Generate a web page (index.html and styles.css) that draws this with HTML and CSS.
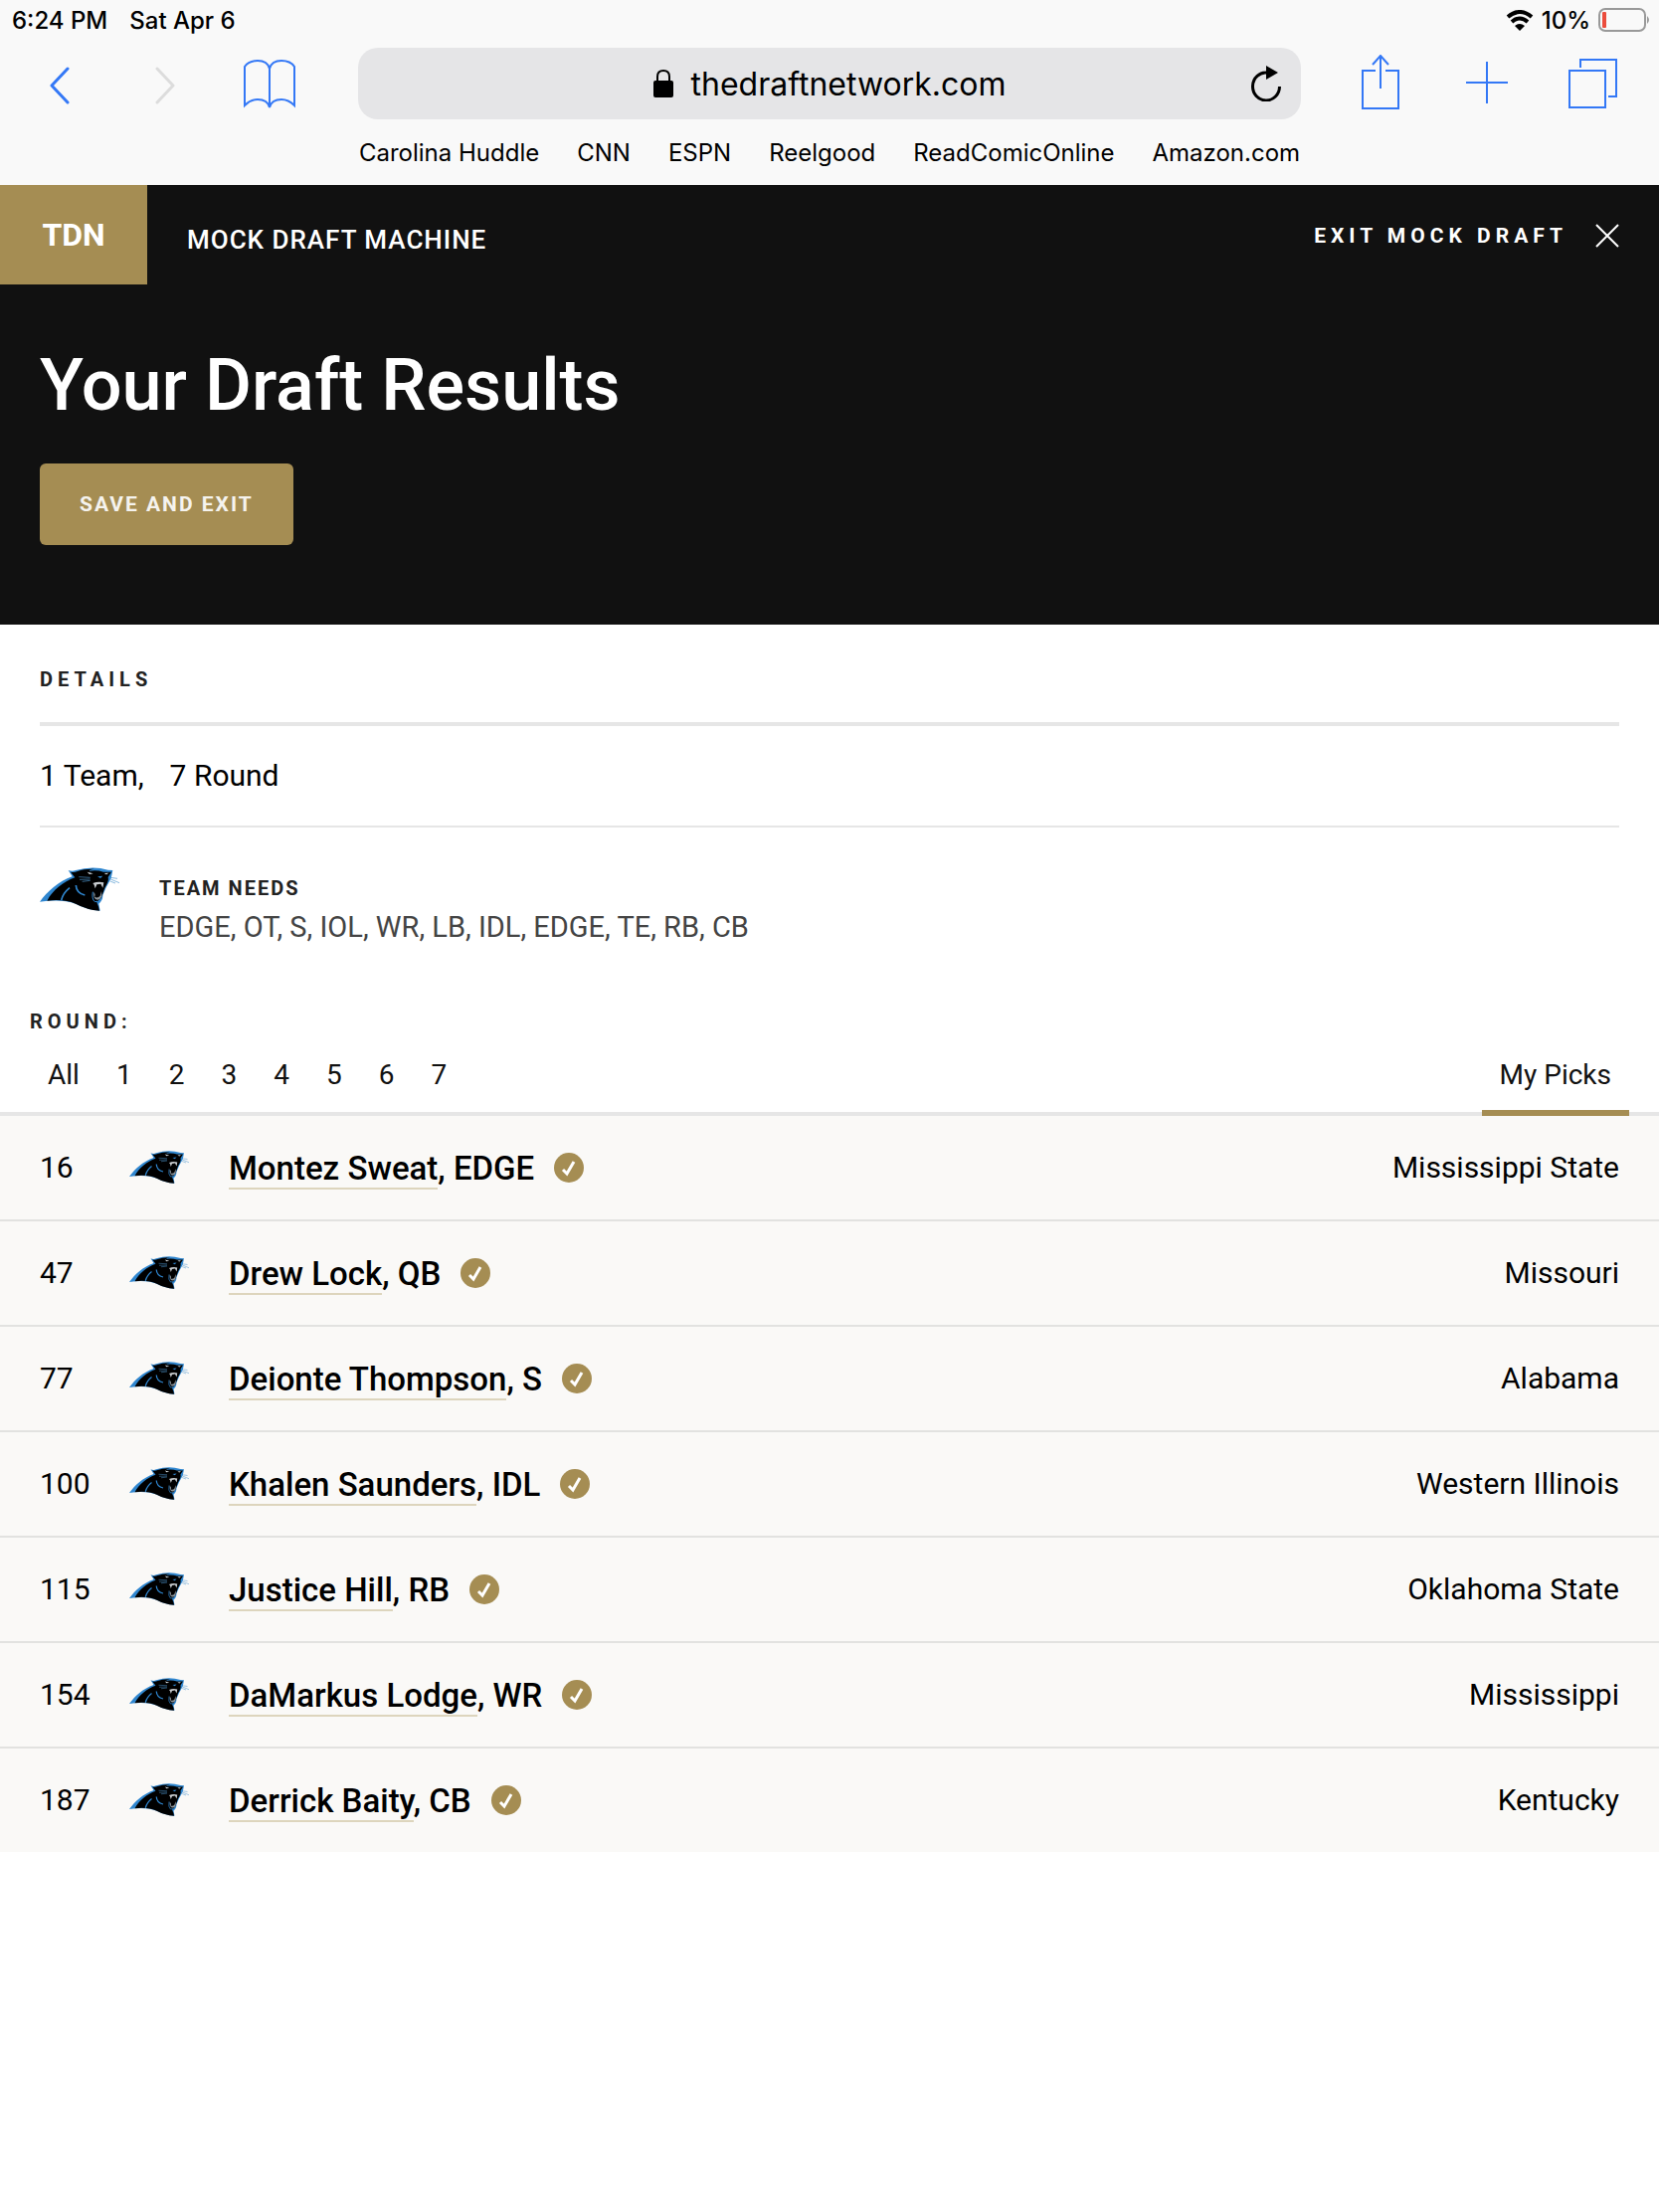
FILE: index.html
```html
<!DOCTYPE html>
<html lang="en">

<head>
    <meta charset="UTF-8">
    <meta name="viewport" content="width=device-width, initial-scale=1.0">
    <title>Mock Draft Machine</title>
    <link rel="stylesheet" href="styles.css">
</head>

<body>
    <svg class="sprite" aria-hidden="true">
        <symbol id="panther" viewBox="0 0 240 132">
            <path fill="#2f86cf" d="M0 104 C22 74 56 42 98 28 L86 9 Q98 14 108 9 Q160-6 206 8 L220 9 L215 34 Q199 60 190 84 Q190 100 178 110 L182 131 Q142 128 108 110 Q64 94 0 104 Z" />
            <path fill="#000" d="M22 101 C40 68 70 44 106 31 L93 14 Q104 17 114 12 Q134 4 164 5 Q146 8 150 11 Q174 8 192 14 L216 14 L206 30 Q210 40 196 62 L186 90 Q182 102 172 106 Q178 118 180 131 Q142 128 108 110 Q74 95 22 101 Z" />
            <path fill="none" stroke="#2f86cf" stroke-width="5" d="M109 54 Q110 78 136 84 M90 62 Q70 78 65 99" />
            <path fill="none" stroke="#2f86cf" stroke-width="3" d="M160 74 Q156 96 166 104 Q178 106 185 94" />
            <path fill="#c9cdd0" d="M160 48 Q176 42 193 46 L190 62 L184 50 L172 52 L167 64 L164 53 Z" />
            <path fill="#8f979d" d="M163 74 Q170 82 166 90 Q176 94 182 86 L186 72 Q190 96 176 98 Q160 98 163 74 Z" />
            <path fill="#dfe6ea" d="M143 14 L161 19 L150 21 Z M194 18 L208 17 L201 22 Z" />
            <path fill="none" stroke="#4f97cf" stroke-width="2" d="M118 29 L152 31 M120 37 L152 36 M128 43 L152 40 M214 31 L234 34 M214 36 L240 47 M212 42 L228 48" />
            <path fill="#2f86cf" d="M174 28 L190 26 L183 33 Z" />
        </symbol>
        <symbol id="check" viewBox="0 0 30 30">
            <circle cx="15" cy="15" r="15" fill="#a58d53" />
            <path fill="none" stroke="#fff" stroke-width="3" d="M9 17 L13 21 L20 9" />
        </symbol>
    </svg>

    <header class="browser">
        <div class="status">
            <span>6:24 PM</span>
            <span>Sat Apr 6</span>
            <span class="status-right">
                <svg width="28" height="21" viewBox="0 0 28 21">
                    <path fill="none" stroke="#000" stroke-width="4" d="M2 7 Q14-3 26 7 M6 12 Q14 5 22 12" />
                    <path d="M14 21 L9 16 Q14 12 19 16 Z" />
                </svg>
                <span>10%</span>
                <svg width="51" height="24" viewBox="0 0 51 24">
                    <rect x="1" y="1" width="46" height="22" rx="6" fill="none" stroke="#999" stroke-width="2" />
                    <rect x="4" y="4" width="4" height="16" rx="1" fill="#eb4d3d" />
                    <path fill="#999" d="M49 8 Q53 12 49 16 Z" />
                </svg>
            </span>
        </div>
        <div class="toolbar">
            <div class="tools">
                <button class="tool" aria-label="Back"><svg width="20" height="42" viewBox="0 -4 20 42"><path class="line back" d="M18 2 L2 19 L18 36" /></svg></button>
                <button class="tool" aria-label="Forward" disabled><svg width="20" height="42" viewBox="0 -4 20 42"><path class="line forward" d="M2 2 L18 19 L2 36" /></svg></button>
                <button class="tool" aria-label="Bookmarks"><svg width="52" height="50" viewBox="0 0 52 50"><path class="line" d="M26 49 V10 Q24 2 14 2 Q5 2 1 8 V47 Q7 41 14 41 Q24 41 26 49 Q28 41 38 41 Q45 41 51 47 V8 Q47 2 38 2 Q28 2 26 10" /></svg></button>
            </div>
            <div class="address">
                <button class="url">
                    <svg width="20" height="28" viewBox="0 0 20 28">
                        <rect y="11" width="20" height="17" rx="2" />
                        <path fill="none" stroke="#000" stroke-width="2" d="M4 12 V7 Q4 1 10 1 Q16 1 16 7 V12" />
                    </svg>
                    thedraftnetwork.com
                </button>
                <button class="reload" aria-label="Reload">
                    <svg width="30" height="36" viewBox="0 0 30 36"><path fill="none" stroke="#000" stroke-width="3" d="M16 7 A13.5 14 0 1 0 28.5 21" /><path d="M15 0 L27 7 L15 14 Z" /></svg>
                </button>
            </div>
            <div class="tools">
                <button class="tool" aria-label="Share"><svg width="38" height="58" viewBox="0 0 38 58"><path class="line" d="M14 16 H1 V54 H37 V16 H24 M19 34 V2 M11 10 L19 1 L27 10" /></svg></button>
                <button class="tool" aria-label="New tab"><svg width="42" height="44" viewBox="0 0 42 44"><path class="line" d="M21 0 V42 M0 21 H42" /></svg></button>
                <button class="tool" aria-label="Tabs"><svg width="50" height="50" viewBox="0 0 50 50"><path class="line" d="M1 12 H37 V49 H1 Z M12 9 V1 H48 V38 H40" /></svg></button>
            </div>
        </div>
        <nav class="favorites">
            <a href="#">Carolina Huddle</a>
            <a href="#">CNN</a>
            <a href="#">ESPN</a>
            <a href="#">Reelgood</a>
            <a href="#">ReadComicOnline</a>
            <a href="#">Amazon.com</a>
        </nav>
    </header>

    <section class="hero">
        <div class="topbar">
            <a class="logo" href="#">TDN</a>
            <span class="machine">MOCK DRAFT MACHINE</span>
            <a class="exit" href="#">EXIT MOCK DRAFT
                <svg width="24" height="24" viewBox="0 0 24 24"><path fill="none" stroke="#fff" stroke-width="2" d="M1 1 L23 23 M23 1 L1 23" /></svg>
            </a>
        </div>
        <div class="hero-content">
            <h1>Your Draft Results</h1>
            <button class="save">SAVE AND EXIT</button>
        </div>
    </section>

    <main>
        <section class="details">
            <h2 class="label">DETAILS</h2>
            <p class="summary"><span>1 Team,</span><span>7 Round</span></p>
            <div class="team">
                <svg class="team-logo" role="img" aria-label="Carolina Panthers"><use href="#panther" /></svg>
                <div>
                    <h3>TEAM NEEDS</h3>
                    <p class="needs">EDGE, OT, S, IOL, WR, LB, IDL, EDGE, TE, RB, CB</p>
                </div>
            </div>
        </section>

        <section class="rounds">
            <h2 class="label">ROUND:</h2>
            <nav class="tabs">
                <button>All</button>
                <button>1</button>
                <button>2</button>
                <button>3</button>
                <button>4</button>
                <button>5</button>
                <button>6</button>
                <button>7</button>
                <button class="active">My Picks</button>
            </nav>
        </section>

        <table class="picks">
            <tbody>
                <tr>
                    <td class="number">16</td>
                    <td class="pick-team"><svg><use href="#panther" /></svg></td>
                    <td class="player"><div><span><a href="#">Montez Sweat</a>, EDGE</span><svg><use href="#check" /></svg></div></td>
                    <td class="college">Mississippi State</td>
                </tr>
                <tr>
                    <td class="number">47</td>
                    <td class="pick-team"><svg><use href="#panther" /></svg></td>
                    <td class="player"><div><span><a href="#">Drew Lock</a>, QB</span><svg><use href="#check" /></svg></div></td>
                    <td class="college">Missouri</td>
                </tr>
                <tr>
                    <td class="number">77</td>
                    <td class="pick-team"><svg><use href="#panther" /></svg></td>
                    <td class="player"><div><span><a href="#">Deionte Thompson</a>, S</span><svg><use href="#check" /></svg></div></td>
                    <td class="college">Alabama</td>
                </tr>
                <tr>
                    <td class="number">100</td>
                    <td class="pick-team"><svg><use href="#panther" /></svg></td>
                    <td class="player"><div><span><a href="#">Khalen Saunders</a>, IDL</span><svg><use href="#check" /></svg></div></td>
                    <td class="college">Western Illinois</td>
                </tr>
                <tr>
                    <td class="number">115</td>
                    <td class="pick-team"><svg><use href="#panther" /></svg></td>
                    <td class="player"><div><span><a href="#">Justice Hill</a>, RB</span><svg><use href="#check" /></svg></div></td>
                    <td class="college">Oklahoma State</td>
                </tr>
                <tr>
                    <td class="number">154</td>
                    <td class="pick-team"><svg><use href="#panther" /></svg></td>
                    <td class="player"><div><span><a href="#">DaMarkus Lodge</a>, WR</span><svg><use href="#check" /></svg></div></td>
                    <td class="college">Mississippi</td>
                </tr>
                <tr>
                    <td class="number">187</td>
                    <td class="pick-team"><svg><use href="#panther" /></svg></td>
                    <td class="player"><div><span><a href="#">Derrick Baity</a>, CB</span><svg><use href="#check" /></svg></div></td>
                    <td class="college">Kentucky</td>
                </tr>
            </tbody>
        </table>
    </main>
</body>

</html>
```

FILE: styles.css
```css
*,
*:before,
*:after {
    box-sizing: border-box;
}

body {
    margin: 0;
    background: #fff;
    color: #000;
    font-family: Roboto, "Noto Sans", sans-serif;
    font-size: 30px;
}

h1, h2, h3, p {
    margin: 0;
}

a {
    color: inherit;
    text-decoration: none;
}

button {
    padding: 0;
    border: 0;
    background: none;
    color: inherit;
    font: inherit;
}

svg {
    display: block;
    flex-shrink: 0;
}

.sprite {
    position: absolute;
    width: 0;
    height: 0;
}

/* browser bar */
.browser {
    background: #f9f9f9;
    font-family: Inter, sans-serif;
    font-size: 24px;
}

.status {
    display: flex;
    align-items: center;
    gap: 22px;
    height: 40px;
    padding: 0 10px 0 12px;
    font-weight: 500;
}

.status-right {
    display: flex;
    align-items: center;
    gap: 8px;
    margin-left: auto;
}

.toolbar {
    display: grid;
    grid-template-columns: 1fr 948px 1fr;
    margin-top: 8px;
}

.tools {
    display: flex;
    align-items: center;
    justify-content: space-between;
    padding: 0 40px 0 54px;
}

.tools:first-child {
    padding: 0 63px 0 34px;
}

.tool {
    display: flex;
    justify-content: center;
    width: 52px;
}

.line {
    fill: none;
    stroke: #3478f6;
    stroke-width: 2;
}

.back,
.forward {
    stroke-width: 3;
    stroke-linecap: round;
    stroke-linejoin: round;
}

.forward {
    stroke: #dcdcdc;
}

.address {
    display: flex;
    align-items: center;
    height: 72px;
    padding: 0 20px 0 50px;
    border-radius: 20px;
    background: #e5e5e7;
}

.url {
    display: flex;
    flex: 1;
    align-items: center;
    justify-content: center;
    gap: 18px;
    font-size: 32px;
}

.favorites {
    display: flex;
    justify-content: center;
    gap: 38px;
    padding: 17px 0 15px;
    line-height: 34px;
}

/* hero */
.hero {
    background: #111;
    color: #fff;
    padding-bottom: 80px;
}

.topbar {
    display: flex;
    align-items: center;
    padding-right: 40px;
}

.logo {
    width: 148px;
    background: #a58d53;
    font-size: 32px;
    font-weight: 700;
    line-height: 100px;
    text-align: center;
}

.machine {
    margin-left: 40px;
    padding-top: 10px;
    font-size: 26px;
    font-weight: 500;
    letter-spacing: 1px;
}

.exit {
    display: flex;
    align-items: center;
    gap: 28px;
    margin-left: auto;
    padding-top: 2px;
    font-size: 21px;
    font-weight: 700;
    letter-spacing: 5px;
}

.hero-content {
    padding: 54px 40px 0;
}

h1 {
    font-size: 72px;
    font-weight: 500;
    line-height: 96px;
}

.save {
    margin-top: 30px;
    padding: 0 40px;
    border-radius: 6px;
    background: #a58d53;
    color: #f5f3ee;
    font-size: 21px;
    font-weight: 700;
    letter-spacing: 2px;
    line-height: 82px;
}

/* details */
.label {
    color: #222;
    font-size: 20px;
    font-weight: 700;
    letter-spacing: 5px;
    line-height: 30px;
}

.details {
    padding: 40px 40px 0;
}

.summary {
    display: flex;
    gap: 26px;
    margin-top: 28px;
    padding: 28px 0;
    border-top: 4px solid #e6e6e6;
    border-bottom: 2px solid #e6e6e6;
    line-height: 44px;
}

.team {
    display: flex;
    gap: 40px;
    padding-top: 40px;
}

.team-logo {
    width: 80px;
    height: 44px;
}

h3 {
    padding-top: 6px;
    color: #222;
    font-size: 20px;
    letter-spacing: 2px;
    line-height: 30px;
}

.needs {
    color: #444;
    font-size: 29px;
    line-height: 48px;
}

/* round tabs */
.rounds {
    padding: 56px 30px 0;
    border-bottom: 4px solid #e6e6e6;
}

.tabs {
    display: flex;
    gap: 1px;
    margin-bottom: -4px;
    color: #111;
    font-size: 28px;
    line-height: 44px;
}

.tabs button {
    padding: 17px 18px 13px;
    border-bottom: 6px solid transparent;
}

.tabs .active {
    margin-left: auto;
    border-color: #a58d53;
}

/* picks */
.picks {
    width: 100%;
    border-spacing: 0;
    background: #faf9f7;
}

.picks td {
    height: 106px;
    padding: 0;
    border-bottom: 2px solid #e2e2e0;
}

.picks tr:last-child td {
    height: 104px;
    border-bottom: 0;
}

.picks .number,
.picks .pick-team,
.picks .college {
    padding-bottom: 2px;
}

.picks .number {
    width: 130px;
    padding-left: 40px;
}

.pick-team {
    width: 100px;
}

.pick-team svg {
    width: 60px;
    height: 33px;
}

.player {
    font-size: 33px;
    font-weight: 500;
}

.player div {
    display: flex;
    align-items: center;
    gap: 20px;
}

.player svg {
    width: 30px;
    height: 30px;
}

.player a {
    border-bottom: 2px solid #ddd5bd;
}

.picks .college {
    padding-right: 40px;
    text-align: right;
}
```
